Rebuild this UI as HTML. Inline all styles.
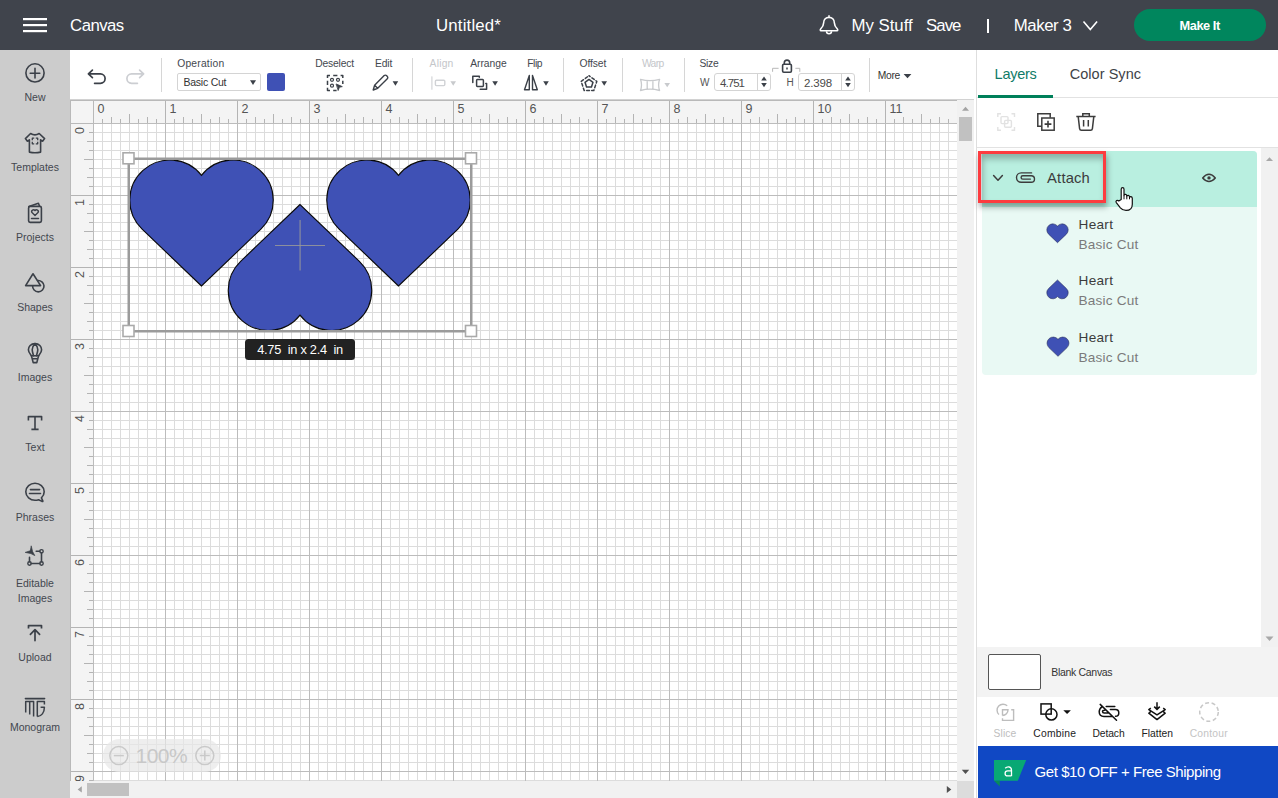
<!DOCTYPE html>
<html><head><meta charset="utf-8"><title>Canvas</title>
<style>
html,body{margin:0;padding:0;width:1278px;height:798px;overflow:hidden;background:#fff;font-family:"Liberation Sans",sans-serif;}
.t{position:absolute;line-height:1;white-space:pre;font-family:"Liberation Sans",sans-serif;}
.abs{position:absolute;}
svg{position:absolute;left:0;top:0;overflow:visible;}
svg text{font-family:"Liberation Sans",sans-serif;}
#header{position:absolute;left:0;top:0;width:1278px;height:50px;background:#40444c;}
#sidebar{position:absolute;left:0;top:50px;width:70px;height:748px;background:#cccccc;}
#toolbar{position:absolute;left:70px;top:50px;width:906px;height:49px;background:#fff;}
#canvas{position:absolute;left:70px;top:100px;width:906px;height:698px;background:#fff;}
.sl{left:0;width:70px;text-align:center;font-size:10.5px;color:#43474f;}
.tl{font-size:10.5px;color:#44484f;}
.dis{color:#c4c6ca;}
#panel{position:absolute;left:976px;top:50px;width:302px;height:748px;background:#fff;}
</style></head>
<body>
<!-- HEADER -->
<div id="header">
  <svg width="1278" height="50">
    <rect x="23" y="18" width="24" height="2.2" fill="#fff"/>
    <rect x="23" y="24" width="24" height="2.2" fill="#fff"/>
    <rect x="23" y="30" width="24" height="2.2" fill="#fff"/>
  </svg>
  <svg width="1278" height="50">
    <path d="M829 15.3V17.4M821 30.8C820.2 30.8 820 29.6 820.8 28.8C822.6 27 823.6 25.6 823.6 23C823.6 19.6 826 17.4 829 17.4C832 17.4 834.4 19.6 834.4 23C834.4 25.6 835.4 27 837.2 28.8C838 29.6 837.8 30.8 837 30.8Z" fill="none" stroke="#fff" stroke-width="1.6" stroke-linejoin="round"/>
    <path d="M826.5 31.2A2.5 2.5 0 0 0 831.5 31.2" fill="none" stroke="#fff" stroke-width="1.5"/>
  </svg>
  <div class="abs" style="left:987px;top:19px;width:1.6px;height:14px;background:#fff;"></div>
  <svg width="1278" height="50">
    <path d="M1083.5 21.5l6.8 8 6.8-8" fill="none" stroke="#fff" stroke-width="1.6"/>
  </svg>
  <div class="abs" style="left:1134px;top:9px;width:132px;height:32px;border-radius:16px;background:#00865d;"></div>
</div>

<!-- SIDEBAR -->
<div id="sidebar"></div>
<svg width="70" height="798" style="left:0;top:0">
 <g fill="none" stroke="#3b4048" stroke-width="1.6" stroke-linecap="round" stroke-linejoin="round">
  <!-- New -->
  <circle cx="35" cy="72.9" r="9.1"/>
  <path d="M30.2 73.2H39.8M35 68.2V78"/>
  <!-- Templates -->
  <path d="M30.6 133.5Q34.9 136.2 39.2 133.5L44.6 138.6L42.6 141.2L40.6 139.8V152.1Q35 153.3 29.4 152.1V139.8L27.4 141.2L25.4 138.6Z"/>
  <path d="M32.3 140.2V138.2H34.2M35.8 138.2H37.7V140.2M37.7 141.8V143.8H35.8M34.2 143.8H32.3V141.8" stroke-width="1.3" stroke-linecap="butt"/>
  <!-- Projects -->
  <rect x="28.6" y="206.4" width="12.8" height="16" rx="1.6"/>
  <path d="M28.9 206.4L38.4 203.3L39.6 206.2"/>
  <path d="M35 215.6L32 212.6A1.6 1.6 0 0 1 35 210.6A1.6 1.6 0 0 1 38 212.6Z" stroke-width="1.4"/>
  <path d="M31.5 218.6H38.5" stroke-width="1.5"/>
  <!-- Shapes -->
  <path d="M33 273.8L25.6 285.6H40.6Z"/>
  <path d="M37.6 280.5A5.7 5.7 0 1 1 32.6 285.8"/>
  <!-- Images -->
  <path d="M35 343.6C30.8 343.6 28.4 346.6 28.4 349.8C28.4 352.4 30 354 31.4 355.8H38.6C40 354 41.6 352.4 41.6 349.8C41.6 346.6 39.2 343.6 35 343.6Z"/>
  <path d="M35 343.6C32.6 346 32.2 348.5 32.2 349.8C32.2 351.6 33 353.8 33.6 355.8M35 343.6C37.4 346 37.8 348.5 37.8 349.8C37.8 351.6 37 353.8 36.4 355.8"/>
  <path d="M31.4 355.8L33.2 362.6H36.8L38.6 355.8M32.3 358.8H37.7"/>
  <!-- Text -->
  <path d="M28.4 420.5V416.6H41.6V420.5M35 416.6V429.4M31.4 429.4H38.6" stroke-linecap="butt"/>
  <!-- Phrases -->
  <path d="M38.6 499.7C37.5 500.1 36.3 500.3 35 500.3C30.2 500.3 25.8 496.8 25.8 491.8C25.8 486.8 30.2 483.3 35 483.3C39.8 483.3 44.2 486.8 44.2 491.8C44.2 494.2 43.2 496.2 41.4 497.8L42.8 500.8C43.1 501.5 42.6 501.6 42 501.4Z"/>
  <path d="M30.4 489.6H39.6M29.5 493.5H40.5"/>
  <!-- Editable -->
  <path d="M31.3 546.2L32.6 551.6L34.8 555.6L30.9 553.6L25.2 552.4L30.1 550.8Z" fill="#3b4048" stroke-width="0.7"/>
  <path d="M36.2 551.3H39.8M41.5 553V561.8M31.2 563.5H39.8M29.5 557.4V561.8"/>
  <circle cx="41.5" cy="551.3" r="1.7" stroke-width="1.4"/>
  <circle cx="41.5" cy="563.5" r="1.7" stroke-width="1.4"/>
  <circle cx="29.5" cy="563.5" r="1.7" stroke-width="1.4"/>
  <!-- Upload -->
  <path d="M28.5 628.5V625.6H41.5V628.5" stroke-linecap="butt" stroke-width="1.7"/>
  <path d="M30.4 634.4L35 629.6L39.6 634.4M35 629.8V640.6" stroke-width="1.7"/>
  <!-- Monogram -->
  <path d="M25.4 698.6H44.6" stroke-width="1.6"/>
  <path d="M25.7 712.6V701.4H33.6V716.4M29.7 701.4V714.4M37.3 716.4V701.4H44.4V704.6M40.6 707.3H44.4C44.4 712.6 41.4 716.4 37.3 716.4" stroke-linecap="butt" stroke-width="1.5"/>
 </g>
</svg>
<div class="t sl" style="top:91.70px">New</div>
<div class="t sl" style="top:161.70px">Templates</div>
<div class="t sl" style="top:231.70px">Projects</div>
<div class="t sl" style="top:301.70px">Shapes</div>
<div class="t sl" style="top:371.70px">Images</div>
<div class="t sl" style="top:441.70px">Text</div>
<div class="t sl" style="top:511.70px">Phrases</div>
<div class="t sl" style="top:578.20px">Editable</div>
<div class="t sl" style="top:593.20px">Images</div>
<div class="t sl" style="top:651.70px">Upload</div>
<div class="t sl" style="top:721.70px">Monogram</div>

<!-- TOOLBAR -->
<div id="toolbar"></div>
<svg width="1278" height="100" style="left:0;top:0">
 <g fill="none" stroke-linecap="round" stroke-linejoin="round">
  <!-- undo -->
  <path d="M92.4 70.2L88.4 73.9L92.4 77.6M88.6 73.9H100.4A4.7 4.7 0 0 1 100.4 83.3H94.6" stroke="#3b4048" stroke-width="1.7"/>
  <!-- redo -->
  <path d="M139.6 70.2L143.6 73.9L139.6 77.6M143.4 73.9H131.6A4.7 4.7 0 0 0 131.6 83.3H137.4" stroke="#ccced2" stroke-width="1.7"/>
  <!-- separators -->
  <path d="M161.5 58V92M412.5 58V92M563.5 58V92M622.5 58V92M684.5 58V92M869.5 58V92" stroke="#d6d6d6" stroke-width="1" stroke-linecap="butt"/>
  <!-- deselect -->
  <path d="M327.5 78V75.5H330M333.2 75.5H337.4M340.6 75.5H342.8V78M342.8 80.8V84M327.5 80.8V85M327.5 87.8V90.5H330M333.2 90.5H336.6" stroke="#3b4048" stroke-width="1.5" stroke-linecap="butt"/>
  <circle cx="332" cy="79.8" r="1.5" stroke="#3b4048" stroke-width="1.2"/>
  <circle cx="338" cy="79.8" r="1.5" stroke="#3b4048" stroke-width="1.2"/>
  <circle cx="332" cy="85.7" r="1.5" stroke="#3b4048" stroke-width="1.2"/>
  <path d="M336.4 84.1L342.3 86.6L339.4 87.3L338.3 90.2Z" fill="#3b4048" stroke="#3b4048" stroke-width="0.8"/>
  <!-- pencil -->
  <path d="M373.2 90L374.6 85.2L384.2 75.6A1.6 1.6 0 0 1 386.5 75.6L387.3 76.4A1.6 1.6 0 0 1 387.3 78.7L377.7 88.3Z M374.6 85.2L377.7 88.3" stroke="#3b4048" stroke-width="1.4"/>
  <!-- align (disabled) -->
  <path d="M431.9 76.8V89.2" stroke="#d3d5d8" stroke-width="1.2"/>
  <rect x="435.4" y="80.2" width="9.4" height="5.4" rx="1" stroke="#d0d2d5" stroke-width="1.4"/>
  <!-- arrange -->
  <path d="M472.8 82.4V76.2H479.3V77.2M480.2 89.2H486.6V83.6H485.8" stroke="#3b4048" stroke-width="1.5"/>
  <rect x="476.6" y="79.6" width="6.8" height="6.8" rx="0.8" stroke="#3b4048" stroke-width="1.5"/>
  <!-- flip -->
  <path d="M529.3 75.4V89.8H524.5ZM532.5 75.4V89.8H537.3Z" stroke="#3b4048" stroke-width="1.4"/>
  <!-- offset -->
  <path d="M589.00 79.40L592.99 82.30L591.47 87.00L586.53 87.00L585.01 82.30Z" stroke="#3b4048" stroke-width="1.5"/>
  <path d="M589.00 75.70L596.80 81.37L593.82 90.53L584.18 90.53L581.20 81.37Z" stroke="#3b4048" stroke-width="1.5" stroke-dasharray="2.8 2.2" stroke-dashoffset="1.4"/>
  <!-- warp -->
  <path d="M640.5 79.3Q650 82 659.6 79.3Q657.6 85 659.6 90.5Q650 87.8 640.5 90.5Q642.5 85 640.5 79.3ZM647.2 81.2V88.6M652.9 81.2V88.6" stroke="#c8cacd" stroke-width="1.3"/>
  <!-- lock -->
  <path d="M784.3 64.3V62.8A2.7 2.7 0 0 1 789.7 62.8V64.3" stroke="#3b4048" stroke-width="1.6"/>
  <rect x="782.6" y="64.3" width="8.8" height="7.9" rx="1.2" stroke="#3b4048" stroke-width="1.6"/>
  <path d="M787 67.6V69.4" stroke="#3b4048" stroke-width="1.5" stroke-linecap="butt"/>
  <path d="M772.6 71.8V68.3H778.6M795.4 68.3H799.8V71.8" stroke="#b8b8b8" stroke-width="1" stroke-linecap="butt" stroke-linejoin="miter"/>
 </g>
 <g fill="#3b4048">
  <path d="M250 80.2H256L253 85Z"/>
  <path d="M392.6 81.3H398.2L395.4 85.7Z"/>
  <path d="M450.4 81.3H456L453.2 85.7Z" fill="#c8cacd"/>
  <path d="M492.3 81.3H497.9L495.1 85.7Z"/>
  <path d="M543.2 81.3H548.8L546 85.7Z"/>
  <path d="M601.4 81.3H607L604.2 85.7Z"/>
  <path d="M664.4 83H670L667.2 87.3Z" fill="#c8cacd"/>
  <path d="M903.6 74.1H911.4L907.5 78.3Z"/>
  <path d="M761.2 80.6L764 76.6L766.8 80.6ZM761.2 83L764 87.2L766.8 83Z"/>
  <path d="M845.2 80.6L848 76.6L850.8 80.6ZM845.2 83L848 87.2L850.8 83Z"/>
 </g>
</svg>
<div class="abs" style="left:177px;top:73px;width:82px;height:16px;border:1px solid #d4d4d4;border-radius:2px;"></div>
<div class="abs" style="left:267px;top:73px;width:18px;height:18px;border-radius:2px;background:#3f51b5;"></div>
<div class="abs" style="left:714px;top:73px;width:55px;height:16px;border:1px solid #d4d4d4;border-radius:3px;"></div>
<div class="abs" style="left:757px;top:74px;width:1px;height:16px;background:#d4d4d4;"></div>
<div class="abs" style="left:798px;top:73px;width:55px;height:16px;border:1px solid #d4d4d4;border-radius:3px;"></div>
<div class="abs" style="left:841px;top:74px;width:1px;height:16px;background:#d4d4d4;"></div>
<div class="abs" style="left:70px;top:99px;width:904px;height:1px;background:#d2d2d2;"></div>

<!-- CANVAS -->
<div id="canvas">
</div>
<svg width="1278" height="798">
<rect x="70" y="100" width="887" height="23" fill="#f4f4f4"/>
<rect x="70" y="100" width="23" height="681" fill="#f4f4f4"/>
<path d="M93.5 100V123M102.5 119V123M111.5 117V123M120.5 119V123M129.5 114V123M138.5 119V123M147.5 117V123M156.5 119V123M165.5 100V123M174.5 119V123M183.5 117V123M192.5 119V123M201.5 114V123M210.5 119V123M219.5 117V123M228.5 119V123M237.5 100V123M246.5 119V123M255.5 117V123M264.5 119V123M273.5 114V123M282.5 119V123M291.5 117V123M300.5 119V123M309.5 100V123M318.5 119V123M327.5 117V123M336.5 119V123M345.5 114V123M354.5 119V123M363.5 117V123M372.5 119V123M381.5 100V123M390.5 119V123M399.5 117V123M408.5 119V123M417.5 114V123M426.5 119V123M435.5 117V123M444.5 119V123M453.5 100V123M462.5 119V123M471.5 117V123M480.5 119V123M489.5 114V123M498.5 119V123M507.5 117V123M516.5 119V123M525.5 100V123M534.5 119V123M543.5 117V123M552.5 119V123M561.5 114V123M570.5 119V123M579.5 117V123M588.5 119V123M597.5 100V123M606.5 119V123M615.5 117V123M624.5 119V123M633.5 114V123M642.5 119V123M651.5 117V123M660.5 119V123M669.5 100V123M678.5 119V123M687.5 117V123M696.5 119V123M705.5 114V123M714.5 119V123M723.5 117V123M732.5 119V123M741.5 100V123M750.5 119V123M759.5 117V123M768.5 119V123M777.5 114V123M786.5 119V123M795.5 117V123M804.5 119V123M813.5 100V123M822.5 119V123M831.5 117V123M840.5 119V123M849.5 114V123M858.5 119V123M867.5 117V123M876.5 119V123M885.5 100V123M894.5 119V123M903.5 117V123M912.5 119V123M921.5 114V123M930.5 119V123M939.5 117V123M948.5 119V123M70 123.5H93M89 132.5H93M87 141.5H93M89 150.5H93M84 159.5H93M89 168.5H93M87 177.5H93M89 186.5H93M70 195.5H93M89 204.5H93M87 213.5H93M89 222.5H93M84 231.5H93M89 240.5H93M87 249.5H93M89 258.5H93M70 267.5H93M89 276.5H93M87 285.5H93M89 294.5H93M84 303.5H93M89 312.5H93M87 321.5H93M89 330.5H93M70 339.5H93M89 348.5H93M87 357.5H93M89 366.5H93M84 375.5H93M89 384.5H93M87 393.5H93M89 402.5H93M70 411.5H93M89 420.5H93M87 429.5H93M89 438.5H93M84 447.5H93M89 456.5H93M87 465.5H93M89 474.5H93M70 483.5H93M89 492.5H93M87 501.5H93M89 510.5H93M84 519.5H93M89 528.5H93M87 537.5H93M89 546.5H93M70 555.5H93M89 564.5H93M87 573.5H93M89 582.5H93M84 591.5H93M89 600.5H93M87 609.5H93M89 618.5H93M70 627.5H93M89 636.5H93M87 645.5H93M89 654.5H93M84 663.5H93M89 672.5H93M87 681.5H93M89 690.5H93M70 699.5H93M89 708.5H93M87 717.5H93M89 726.5H93M84 735.5H93M89 744.5H93M87 753.5H93M89 762.5H93M70 771.5H93M89 780.5H93" stroke="#b4b4b4" stroke-width="1" fill="none"/>
<path d="M70 100.5H957M70.5 100V781M93.5 100V781M70 123.5H957" stroke="#b9b9b9" stroke-width="1" fill="none"/>
<text x="97.6" y="113" font-size="12.5" fill="#555">0</text>
<text x="169.6" y="113" font-size="12.5" fill="#555">1</text>
<text x="241.6" y="113" font-size="12.5" fill="#555">2</text>
<text x="313.6" y="113" font-size="12.5" fill="#555">3</text>
<text x="385.6" y="113" font-size="12.5" fill="#555">4</text>
<text x="457.6" y="113" font-size="12.5" fill="#555">5</text>
<text x="529.6" y="113" font-size="12.5" fill="#555">6</text>
<text x="601.6" y="113" font-size="12.5" fill="#555">7</text>
<text x="673.6" y="113" font-size="12.5" fill="#555">8</text>
<text x="745.6" y="113" font-size="12.5" fill="#555">9</text>
<text x="817.6" y="113" font-size="12.5" fill="#555">10</text>
<text x="889.6" y="113" font-size="12.5" fill="#555">11</text>
<text transform="translate(84 127) rotate(-90)" text-anchor="end" font-size="12.5" fill="#555">0</text>
<text transform="translate(84 199) rotate(-90)" text-anchor="end" font-size="12.5" fill="#555">1</text>
<text transform="translate(84 271) rotate(-90)" text-anchor="end" font-size="12.5" fill="#555">2</text>
<text transform="translate(84 343) rotate(-90)" text-anchor="end" font-size="12.5" fill="#555">3</text>
<text transform="translate(84 415) rotate(-90)" text-anchor="end" font-size="12.5" fill="#555">4</text>
<text transform="translate(84 487) rotate(-90)" text-anchor="end" font-size="12.5" fill="#555">5</text>
<text transform="translate(84 559) rotate(-90)" text-anchor="end" font-size="12.5" fill="#555">6</text>
<text transform="translate(84 631) rotate(-90)" text-anchor="end" font-size="12.5" fill="#555">7</text>
<text transform="translate(84 703) rotate(-90)" text-anchor="end" font-size="12.5" fill="#555">8</text>
<text transform="translate(84 775) rotate(-90)" text-anchor="end" font-size="12.5" fill="#555">9</text>
<path d="M102.5 123V781M111.5 123V781M120.5 123V781M129.5 123V781M138.5 123V781M147.5 123V781M156.5 123V781M174.5 123V781M183.5 123V781M192.5 123V781M201.5 123V781M210.5 123V781M219.5 123V781M228.5 123V781M246.5 123V781M255.5 123V781M264.5 123V781M273.5 123V781M282.5 123V781M291.5 123V781M300.5 123V781M318.5 123V781M327.5 123V781M336.5 123V781M345.5 123V781M354.5 123V781M363.5 123V781M372.5 123V781M390.5 123V781M399.5 123V781M408.5 123V781M417.5 123V781M426.5 123V781M435.5 123V781M444.5 123V781M462.5 123V781M471.5 123V781M480.5 123V781M489.5 123V781M498.5 123V781M507.5 123V781M516.5 123V781M534.5 123V781M543.5 123V781M552.5 123V781M561.5 123V781M570.5 123V781M579.5 123V781M588.5 123V781M606.5 123V781M615.5 123V781M624.5 123V781M633.5 123V781M642.5 123V781M651.5 123V781M660.5 123V781M678.5 123V781M687.5 123V781M696.5 123V781M705.5 123V781M714.5 123V781M723.5 123V781M732.5 123V781M750.5 123V781M759.5 123V781M768.5 123V781M777.5 123V781M786.5 123V781M795.5 123V781M804.5 123V781M822.5 123V781M831.5 123V781M840.5 123V781M849.5 123V781M858.5 123V781M867.5 123V781M876.5 123V781M894.5 123V781M903.5 123V781M912.5 123V781M921.5 123V781M930.5 123V781M939.5 123V781M948.5 123V781M93 132.5H957M93 141.5H957M93 150.5H957M93 159.5H957M93 168.5H957M93 177.5H957M93 186.5H957M93 204.5H957M93 213.5H957M93 222.5H957M93 231.5H957M93 240.5H957M93 249.5H957M93 258.5H957M93 276.5H957M93 285.5H957M93 294.5H957M93 303.5H957M93 312.5H957M93 321.5H957M93 330.5H957M93 348.5H957M93 357.5H957M93 366.5H957M93 375.5H957M93 384.5H957M93 393.5H957M93 402.5H957M93 420.5H957M93 429.5H957M93 438.5H957M93 447.5H957M93 456.5H957M93 465.5H957M93 474.5H957M93 492.5H957M93 501.5H957M93 510.5H957M93 519.5H957M93 528.5H957M93 537.5H957M93 546.5H957M93 564.5H957M93 573.5H957M93 582.5H957M93 591.5H957M93 600.5H957M93 609.5H957M93 618.5H957M93 636.5H957M93 645.5H957M93 654.5H957M93 663.5H957M93 672.5H957M93 681.5H957M93 690.5H957M93 708.5H957M93 717.5H957M93 726.5H957M93 735.5H957M93 744.5H957M93 753.5H957M93 762.5H957M93 780.5H957" stroke="#dcdcdc" stroke-width="1" fill="none"/>
<path d="M93.5 123V781M165.5 123V781M237.5 123V781M309.5 123V781M381.5 123V781M453.5 123V781M525.5 123V781M597.5 123V781M669.5 123V781M741.5 123V781M813.5 123V781M885.5 123V781M93 123.5H957M93 195.5H957M93 267.5H957M93 339.5H957M93 411.5H957M93 483.5H957M93 555.5H957M93 627.5H957M93 699.5H957M93 771.5H957" stroke="#bcbcbc" stroke-width="1" fill="none"/>
<path d="M201.50 286.00L142.12 229.13A40.14 40.14 0 1 1 201.50 175.40A40.14 40.14 0 1 1 260.88 229.13Z" fill="#3f51b5" stroke="#0a0a0a" stroke-width="1.15"/>
<path d="M398.50 286.00L339.12 229.13A40.14 40.14 0 1 1 398.50 175.40A40.14 40.14 0 1 1 457.88 229.13Z" fill="#3f51b5" stroke="#0a0a0a" stroke-width="1.15"/>
<path d="M300.00 204.50L240.62 261.37A40.14 40.14 0 1 0 300.00 315.10A40.14 40.14 0 1 0 359.38 261.37Z" fill="#3f51b5" stroke="#0a0a0a" stroke-width="1.15"/>
<path d="M275 245.5H325" stroke="#9a9a9a" stroke-width="1" opacity="0.85"/><path d="M300.1 220V270.5" stroke="#9a9a9a" stroke-width="1.4" opacity="0.7"/>
<rect x="128.75" y="158.75" width="342.5" height="172.5" fill="none" stroke="#9b9b9b" stroke-width="2.5"/>
<rect x="123.0" y="152.8" width="11" height="11" fill="#fff" stroke="#aaa" stroke-width="1.6"/>
<rect x="465.5" y="152.8" width="11" height="11" fill="#fff" stroke="#aaa" stroke-width="1.6"/>
<rect x="123.0" y="325.5" width="11" height="11" fill="#fff" stroke="#aaa" stroke-width="1.6"/>
<rect x="465.5" y="325.5" width="11" height="11" fill="#fff" stroke="#aaa" stroke-width="1.6"/>
<rect x="245" y="339" width="110" height="21" rx="3.5" fill="#222"/>
</svg>

<!-- scrollbars -->
<div class="abs" style="left:957px;top:100px;width:17px;height:681px;background:#f1f1f1;"></div>
<div class="abs" style="left:959px;top:117px;width:13px;height:24px;background:#c1c1c1;"></div>
<div class="abs" style="left:70px;top:781px;width:887px;height:17px;background:#f1f1f1;"></div>
<div class="abs" style="left:87px;top:783px;width:42px;height:13px;background:#c1c1c1;"></div>
<div class="abs" style="left:957px;top:781px;width:17px;height:17px;background:#dcdcdc;"></div>
<svg width="1278" height="798" style="left:0;top:0">
 <path d="M962 110.8L965.5 106.8L969 110.8Z" fill="#a3a3a3"/>
 <path d="M961.8 769.8H969.2L965.5 774Z" fill="#505050"/>
 <path d="M946.8 786V793L951.3 789.5Z" fill="#505050"/>
 <path d="M81.8 786.2V792.6L77.6 789.4Z" fill="#a3a3a3"/>
</svg>
<!-- zoom pill -->
<div class="abs" style="left:103px;top:739px;width:118px;height:33px;border-radius:16.5px;background:rgba(232,232,232,0.72);"></div>
<svg width="1278" height="798" style="left:0;top:0">
 <g fill="none" stroke="#c9c9c9" stroke-width="1.5">
  <circle cx="118.8" cy="755.6" r="9"/>
  <path d="M113.8 755.6H123.8"/>
  <circle cx="204.8" cy="755.6" r="9"/>
  <path d="M199.8 755.6H209.8M204.8 750.6V760.6"/>
 </g>
</svg>

<!-- PANEL -->
<div id="panel"></div>
<div class="abs" style="left:976px;top:50px;width:1px;height:748px;background:#dedede;"></div>
<!-- tabs -->
<div class="abs" style="left:977px;top:97px;width:301px;height:1px;background:#e2e2e2;"></div>
<div class="abs" style="left:978px;top:95px;width:75px;height:3px;background:#00805a;"></div>
<svg width="1278" height="798" style="left:0;top:0">
 <g fill="none" stroke-linecap="butt" stroke-linejoin="miter">
  <!-- group (disabled) -->
  <path d="M997.8 117V113.7H1001M1011.5 113.7H1014.5V117M1014.5 127V130.2H1011.5M1001 130.2H997.8V127" stroke="#e2e2e2" stroke-width="1.4"/>
  <rect x="1001" y="116.6" width="7" height="7" rx="1" stroke="#e2e2e2" stroke-width="1.4"/>
  <rect x="1004.6" y="120.4" width="6.8" height="6.8" rx="1" stroke="#e2e2e2" stroke-width="1.4"/>
  <!-- duplicate -->
  <path d="M1041.6 126.2H1037.8V113.8H1050.2V117.8" stroke="#3c3c3c" stroke-width="1.5"/>
  <rect x="1041.8" y="118" width="12.4" height="12.2" stroke="#3c3c3c" stroke-width="1.5"/>
  <path d="M1044.6 124.1H1051.4M1048 120.8V127.6" stroke="#3c3c3c" stroke-width="1.6"/>
  <!-- trash -->
  <path d="M1076.3 116.4H1095.6M1082.8 116.2V113.8H1089.3V116.2M1078.2 116.6L1079.6 128.6Q1079.8 130.2 1081.4 130.2H1090.6Q1092.2 130.2 1092.4 128.6L1093.8 116.6M1083.6 120V126.6M1088.3 120V126.6" stroke="#3c3c3c" stroke-width="1.5"/>
 </g>
</svg>
<div class="abs" style="left:977px;top:147px;width:301px;height:1px;background:#e2e2e2;"></div>
<!-- layers list -->
<div class="abs" style="left:982px;top:151px;width:275px;height:224px;border-radius:4px;background:#e9f9f4;"></div>
<div class="abs" style="left:982px;top:151px;width:275px;height:56px;border-radius:4px 4px 0 0;background:#b9efe0;"></div>
<div class="abs" style="left:1261px;top:148px;width:17px;height:499px;background:#f1f1f1;"></div>
<svg width="1278" height="798" style="left:0;top:0">
  <path d="M1266 161L1269.5 157.2L1273 161Z" fill="#a8a8a8"/>
  <path d="M1265.5 636.5H1273.5L1269.5 641Z" fill="#a8a8a8"/>
  <g fill="none" stroke="#3c3c3c" stroke-width="1.5" stroke-linecap="round" stroke-linejoin="round">
   <path d="M993.6 175.6L998 180.2L1002.4 175.6"/>
   <path d="M1031.6 172.9H1021.2A4.7 4.7 0 0 0 1021.2 182.3H1031.2A3.3 3.3 0 0 0 1031.2 175.7H1022.8A1.7 1.7 0 0 0 1022.8 179.1H1030.4" stroke-width="1.4"/>
   <path d="M1202.7 177.9Q1209 170.8 1215.3 177.9Q1209 185 1202.7 177.9Z" stroke-width="1.5"/>
  </g>
  <circle cx="1209" cy="177.9" r="1.7" fill="#3c3c3c"/>
</svg>
<div class="abs" style="left:978px;top:151px;width:122px;height:46px;border:3px solid #fd3b3f;box-shadow:1px 4px 6px rgba(0,0,0,0.35), inset 2px 5px 6px rgba(0,0,0,0.26);"></div>
<svg width="1278" height="798" style="left:0;top:0">
<path d="M1057.50 242.68L1048.60 234.16A6.01 6.01 0 1 1 1057.50 226.11A6.01 6.01 0 1 1 1066.40 234.16Z" fill="#3f51b5" stroke="#2a2f5a" stroke-width="0.6"/>
<path d="M1057.50 280.00L1048.60 288.52A6.01 6.01 0 1 0 1057.50 296.57A6.01 6.01 0 1 0 1066.40 288.52Z" fill="#3f51b5" stroke="#2a2f5a" stroke-width="0.6"/>
<path d="M1058.00 356.32L1048.90 347.60A6.15 6.15 0 1 1 1058.00 339.36A6.15 6.15 0 1 1 1067.10 347.60Z" fill="#3f51b5" stroke="#2a2f5a" stroke-width="0.6"/>
</svg>
<svg width="1278" height="798" style="left:0;top:0">
 <path d="M1121.2 199.5V189.2Q1121.2 187.6 1122.6 187.6Q1124 187.6 1124 189.2V195.6Q1124.2 194.2 1125.6 194.4Q1126.8 194.6 1126.8 196V196.6Q1127 195.2 1128.3 195.4Q1129.5 195.6 1129.5 197V197.6Q1129.8 196.4 1131 196.6Q1132.3 196.9 1132.3 198.4V204.2Q1132.3 210.4 1126 210.4Q1122.6 210.4 1120.4 207.8L1116.3 202.6Q1115.5 201.3 1116.6 200.6Q1117.7 199.9 1118.8 201Z" fill="#fff" stroke="#111" stroke-width="1.2" stroke-linejoin="round"/>
 <path d="M1124 195.6V199.3M1126.8 196.6V199.3M1129.5 197.6V199.3" stroke="#111" stroke-width="1"/>
</svg>
<!-- bottom: blank canvas -->
<div class="abs" style="left:977px;top:647px;width:301px;height:50px;background:#f3f3f3;"></div>
<div class="abs" style="left:988px;top:654px;width:51px;height:34px;border:1px solid #555;border-radius:2px;background:#fff;"></div>
<svg width="1278" height="798" style="left:0;top:0">
 <g fill="none" stroke-linecap="butt" stroke-linejoin="miter">
  <!-- slice -->
  <path d="M1007.2 705.8A5.5 5.5 0 1 0 999 714.6" stroke="#bdbdbd" stroke-width="1.4"/>
  <path d="M1002.5 715.5V709.8H1008A5.6 5.6 0 0 1 1002.5 715.5M1011.2 709.8H1013.6V720.4H1002.5V718.2" stroke="#bdbdbd" stroke-width="1.4"/>
  <!-- combine -->
  <rect x="1041" y="703.9" width="10.2" height="10.2" stroke="#111" stroke-width="1.5"/>
  <circle cx="1051.4" cy="714.4" r="5.6" stroke="#111" stroke-width="1.5"/>
  <!-- detach -->
  <path d="M1100.2 704.4L1116.5 720.3M1106.2 706.5H1114.8M1110.4 709.6H1115.5A3.3 3.3 0 0 1 1115.5 716.2M1101.9 706.8C1099.8 708.2 1099.2 710 1099.2 711.8C1099.2 714.6 1101.2 716.5 1104 716.5H1111.6M1108.6 713.1H1104.2C1103 713.1 1102.5 712.3 1102.5 711.6C1102.5 710.8 1103.2 710.2 1104.5 710.2L1105.6 709.9" stroke="#111" stroke-width="1.5" stroke-linecap="round"/>
  <!-- flatten -->
  <path d="M1157 702.2V709.2M1154.2 706.6L1157 709.4L1159.8 706.6" stroke="#111" stroke-width="1.5"/>
  <path d="M1150.8 708.2L1148.8 709.6L1157 714.8L1165.2 709.6L1163.2 708.2M1150.6 711.6L1148.8 713.2L1157 719.6L1165.2 713.2L1163.4 711.6" stroke="#111" stroke-width="1.5" stroke-linejoin="round"/>
  <!-- contour -->
  <circle cx="1209" cy="712" r="9.3" stroke="#c8c8c8" stroke-width="1.5" stroke-dasharray="4 2.6"/>
 </g>
 <path d="M1063.3 710.2H1070.9L1067.1 713.9Z" fill="#111"/>
</svg>
<!-- banner -->
<div class="abs" style="left:978px;top:746px;width:300px;height:52px;background:#1048c4;"></div>
<svg width="1278" height="798" style="left:0;top:0">
 <path d="M994 760H1026.2L1017.8 780.8H994Z" fill="#08a874"/>
 <path d="M994 780.8H999.8V786.6Z" fill="#088a5c"/>
 <path d="M1005.2 768.2Q1006.6 766.7 1008.6 766.8Q1011.5 767 1011.5 770.2V776.3M1011 770.9H1007.6A2.5 2.5 0 0 0 1007.6 775.9H1011" fill="none" stroke="#fff" stroke-width="1.3"/>
</svg>

<div class="t" style="left:70.10px;top:18.00px;font-size:16.8px;letter-spacing:-0.560px;color:#fff;font-weight:normal">Canvas</div>
<div class="t" style="left:436.00px;top:18.00px;font-size:16.8px;letter-spacing:0.175px;color:#fff;font-weight:normal">Untitled*</div>
<div class="t" style="left:851.40px;top:18.00px;font-size:16.8px;letter-spacing:0.014px;color:#fff;font-weight:normal">My Stuff</div>
<div class="t" style="left:926.00px;top:18.00px;font-size:16.8px;letter-spacing:-0.933px;color:#fff;font-weight:normal">Save</div>
<div class="t" style="left:1013.80px;top:18.00px;font-size:16.8px;letter-spacing:-0.433px;color:#fff;font-weight:normal">Maker 3</div>
<div class="t" style="left:1179.50px;top:20.00px;font-size:12.8px;letter-spacing:-0.450px;color:#fff;font-weight:bold">Make It</div>
<div class="t" style="left:177.20px;top:59.00px;font-size:10.3px;letter-spacing:0.213px;color:#44484f;font-weight:normal">Operation</div>
<div class="t" style="left:315.30px;top:59.00px;font-size:10.3px;letter-spacing:-0.186px;color:#44484f;font-weight:normal">Deselect</div>
<div class="t" style="left:375.10px;top:59.00px;font-size:10.3px;letter-spacing:-0.167px;color:#44484f;font-weight:normal">Edit</div>
<div class="t" style="left:429.60px;top:59.00px;font-size:10.3px;letter-spacing:0.200px;color:#c4c6ca;font-weight:normal">Align</div>
<div class="t" style="left:470.30px;top:59.00px;font-size:10.3px;letter-spacing:-0.050px;color:#44484f;font-weight:normal">Arrange</div>
<div class="t" style="left:527.30px;top:59.00px;font-size:10.3px;letter-spacing:-0.467px;color:#44484f;font-weight:normal">Flip</div>
<div class="t" style="left:579.50px;top:59.00px;font-size:10.3px;letter-spacing:-0.100px;color:#44484f;font-weight:normal">Offset</div>
<div class="t" style="left:641.90px;top:59.00px;font-size:10.3px;letter-spacing:-0.633px;color:#c4c6ca;font-weight:normal">Warp</div>
<div class="t" style="left:699.50px;top:59.00px;font-size:10.3px;letter-spacing:-0.267px;color:#44484f;font-weight:normal">Size</div>
<div class="t" style="left:183.40px;top:77.00px;font-size:10.5px;letter-spacing:-0.225px;color:#333;font-weight:normal">Basic Cut</div>
<div class="t" style="left:699.90px;top:78.00px;font-size:10px;letter-spacing:0.000px;color:#555;font-weight:normal">W</div>
<div class="t" style="left:720.10px;top:78.00px;font-size:11.5px;letter-spacing:-0.975px;color:#4a4a4a;font-weight:normal">4.751</div>
<div class="t" style="left:786.50px;top:78.00px;font-size:10px;letter-spacing:0.000px;color:#555;font-weight:normal">H</div>
<div class="t" style="left:804.00px;top:78.00px;font-size:11.5px;letter-spacing:-0.150px;color:#4a4a4a;font-weight:normal">2.398</div>
<div class="t" style="left:877.70px;top:71.00px;font-size:10.3px;letter-spacing:-0.300px;color:#333;font-weight:normal">More</div>
<div class="t" style="left:994.60px;top:67.00px;font-size:14.5px;letter-spacing:-0.260px;color:#0f7b68;font-weight:normal">Layers</div>
<div class="t" style="left:1069.70px;top:67.00px;font-size:14.5px;letter-spacing:0.044px;color:#3e4247;font-weight:normal">Color Sync</div>
<div class="t" style="left:1047.10px;top:171.00px;font-size:14.8px;letter-spacing:0.160px;color:#3c3c3c;font-weight:normal">Attach</div>
<div class="t" style="left:1078.60px;top:218.00px;font-size:13.6px;letter-spacing:0.275px;color:#3c3c3c;font-weight:normal">Heart</div>
<div class="t" style="left:1078.60px;top:238.00px;font-size:13.6px;letter-spacing:0.175px;color:#7b7b7b;font-weight:normal">Basic Cut</div>
<div class="t" style="left:1078.60px;top:274.00px;font-size:13.6px;letter-spacing:0.275px;color:#3c3c3c;font-weight:normal">Heart</div>
<div class="t" style="left:1078.60px;top:294.00px;font-size:13.6px;letter-spacing:0.175px;color:#7b7b7b;font-weight:normal">Basic Cut</div>
<div class="t" style="left:1078.60px;top:331.00px;font-size:13.6px;letter-spacing:0.275px;color:#3c3c3c;font-weight:normal">Heart</div>
<div class="t" style="left:1078.60px;top:351.00px;font-size:13.6px;letter-spacing:0.175px;color:#7b7b7b;font-weight:normal">Basic Cut</div>
<div class="t" style="left:1051.30px;top:667.00px;font-size:10.5px;letter-spacing:-0.318px;color:#333;font-weight:normal">Blank Canvas</div>
<div class="t" style="left:993.60px;top:729.00px;font-size:10.3px;letter-spacing:0.075px;color:#bdbdbd;font-weight:normal">Slice</div>
<div class="t" style="left:1033.30px;top:729.00px;font-size:10.3px;letter-spacing:0.233px;color:#222;font-weight:normal">Combine</div>
<div class="t" style="left:1092.50px;top:729.00px;font-size:10.3px;letter-spacing:-0.100px;color:#222;font-weight:normal">Detach</div>
<div class="t" style="left:1141.60px;top:729.00px;font-size:10.3px;letter-spacing:-0.033px;color:#222;font-weight:normal">Flatten</div>
<div class="t" style="left:1189.70px;top:729.00px;font-size:10.3px;letter-spacing:0.217px;color:#c4c4c4;font-weight:normal">Contour</div>
<div class="t" style="left:1034.60px;top:764.00px;font-size:15px;letter-spacing:-0.446px;color:#fff;font-weight:normal">Get $10 OFF + Free Shipping</div>
<div class="t" style="left:257.20px;top:344.00px;font-size:12.8px;letter-spacing:-0.259px;color:#fff;font-weight:normal">4.75  in x 2.4  in</div>
<div class="t" style="left:135.60px;top:745.00px;font-size:21px;letter-spacing:-0.567px;color:#c8c8c8;font-weight:normal">100%</div>
</body></html>
